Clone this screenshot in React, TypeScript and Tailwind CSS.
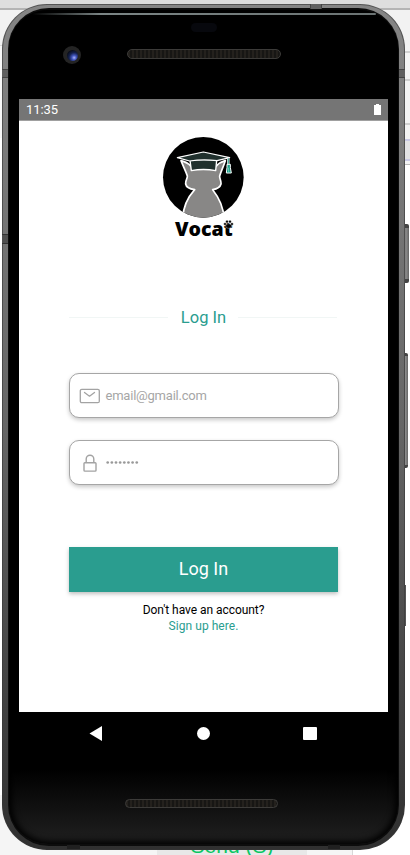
import type { ReactNode } from "react";

function Desktop() {
  return (
    <div className="absolute inset-0 bg-white">
      <div className="h-[8px] bg-[#dedede]" />
      <div className="h-[2px] bg-[#b4b4b4]" />
      <div className="h-[35px] bg-[#f2f2f2]" />
      <div className="flex h-[120px] justify-between">
        <div className="h-[93px] w-3 border-t border-[#d8d8d8] bg-[#f8f8f8]" />
        <div className="flex w-[12px] flex-col bg-[#f3f3f3]">
          <div className="h-[8px] border-b-2 border-[#d0d0d0]" />
          <div className="h-[28px] border-b-2 border-[#d0d0d0]" />
          <div className="h-[44px] border-b-2 border-[#d0d0d0]" />
          <div className="h-[16px] border-b-2 border-[#c9c9e4]" />
          <div className="h-[20px] border-b-2 border-[#c9c9e4] bg-[#e2e2e4]" />
          <div className="h-[4px] border-b border-[#bbbbbb]" />
        </div>
      </div>
      <div className="absolute inset-x-0 bottom-0 flex h-[60px] bg-[#f5f5f5]">
        <div className="w-[157px]" />
        <div className="flex h-full w-[150px] justify-center bg-[#e8e8e8] pt-[39px] font-['Liberation_Sans',sans-serif] text-[21px] leading-[24px] text-[#08c763]">
          Send (S)
        </div>
        <div className="w-[46px] border-r border-[#d8d8d8]" />
        <div className="flex-1 bg-white" />
      </div>
    </div>
  );
}

function SideButtons() {
  return (
    <div className="absolute left-[403px] top-[224px] flex flex-col">
      <div className="h-[59px] w-[6px] rounded-r-[2px] border-y-[4px] border-[#444] bg-gradient-to-r from-[#555] via-[#8c8c8c] to-[#666]" />
      <div className="mt-[70px] h-[115px] w-[5px] rounded-r-[2px] border-y-[3px] border-[#444] bg-gradient-to-r from-[#555] via-[#8c8c8c] to-[#666]" />
      <div className="mt-[117px] h-[41px] w-[3px] bg-[#555]" />
    </div>
  );
}

function Speaker({ className }: { className: string }) {
  return (
    <div
      className={`rounded-full border border-[#3c3b39] bg-[repeating-linear-gradient(90deg,#24211d_0px,#24211d_2px,#171614_2px,#171614_4px)] ${className}`}
    />
  );
}

function Logo() {
  return (
    <svg className="ml-[2px] h-[120px] w-[110px] shrink-0" viewBox="0 0 330 360">
      <defs>
        <clipPath id="disc">
          <circle cx="160" cy="157" r="121" />
        </clipPath>
      </defs>
      <circle cx="160" cy="157" r="121" fill="#000" />
      <g clipPath="url(#disc)">
        <path
          d="M93 107 C105 110 116 116 123 124 L198 124 C205 116 214 110 226 107 C220 125 213 140 209 153 C208 160 214 166 213 177 C210 189 200 192 188 194 C204 214 222 243 222 286 L98 286 C98 246 116 214 134 194 C121 192 109 189 107 177 C106 166 113 160 112 153 C108 140 100 125 93 107Z"
          fill="#888786"
          stroke="#fff"
          strokeWidth="5"
          strokeLinejoin="round"
        />
      </g>
      <path d="M120 106 Q160 101 200 106 L197 137 Q160 130 124 137Z" fill="#20302d" stroke="#fff" strokeWidth="4" strokeLinejoin="round" />
      <path d="M82 98 L160 81 L239 98 L201 107 Q160 102 119 108Z" fill="#20302d" stroke="#fff" strokeWidth="3.5" strokeLinejoin="round" />
      <path d="M235 100 V123" stroke="#fff" strokeWidth="7" />
      <path d="M235 100 V123" stroke="#27a08c" strokeWidth="3" />
      <path d="M231 118 H241 V127 L244 144 H229 L231 127Z" fill="#169c85" stroke="#fff" strokeWidth="3" />
      <path d="M236 128 V142" stroke="#a6e6d8" strokeWidth="2" />
      <text
        x="75"
        y="333"
        textLength="173"
        lengthAdjust="spacingAndGlyphs"
        className="font-['Open_Sans',sans-serif] text-[56px] font-extrabold"
        fill="#000"
      >
        Vocat
      </text>
      <g fill="#000" stroke="#fff" strokeWidth="1">
        <ellipse cx="236" cy="303" rx="9" ry="7" />
        <circle cx="225" cy="297" r="4" />
        <circle cx="231" cy="290" r="4" />
        <circle cx="240" cy="290" r="4" />
        <circle cx="246" cy="297" r="4" />
      </g>
    </svg>
  );
}

function Field({ icon, children }: { icon: ReactNode; children: ReactNode }) {
  return (
    <div className="flex h-[45px] w-[270px] items-center rounded-[10px] border border-[#a6a6a6] bg-white pl-[9px] shadow-[0_2px_4px_rgba(0,0,0,0.22)]">
      <div className="flex w-[22px] justify-center">{icon}</div>
      <div className="pl-[5px] pt-px text-[13px] tracking-[-0.22px] text-[#a6a6a6]">{children}</div>
    </div>
  );
}

function MailIcon() {
  return (
    <svg width="22" height="16" viewBox="0 0 22 16" fill="none" stroke="#a3a3a3" strokeWidth="1.3">
      <rect x="1.3" y="1.3" width="19" height="13.4" rx="1.5" />
      <path d="M5.5 4.5 L10.5 8.2 L15.5 4.5" strokeLinecap="round" strokeLinejoin="round" />
    </svg>
  );
}

function LockIcon() {
  return (
    <svg width="14" height="18" viewBox="0 0 14 18" fill="none" stroke="#a3a3a3" strokeWidth="1.4">
      <rect x="1" y="8.8" width="12" height="8.3" rx="0.8" />
      <path d="M3.2 8.8 V5 a3.8 3.8 0 0 1 7.6 0 V8.8" />
    </svg>
  );
}

function PasswordDots() {
  return (
    <svg width="34" height="4" viewBox="0 0 34 4" fill="#999">
      {Array.from({ length: 8 }, (_, i) => (
        <circle key={i} cx={1.7 + i * 4.15} cy="1.5" r="1.35" />
      ))}
    </svg>
  );
}

function LoginScreen() {
  return (
    <div className="flex h-[613px] w-[369px] flex-col bg-white">
      <div className="flex h-[22px] shrink-0 items-center justify-between border-b border-[#a0a0a0] bg-[#757575] pl-[7px] pr-[7px] text-[13px] text-white">
        <span className="pt-px tracking-[-0.1px]">11:35</span>
        <svg width="7" height="12" viewBox="0 0 7 12" fill="#fff">
          <path d="M2 0h3v1h2v10H0V1h2z" />
        </svg>
      </div>
      <div className="flex flex-col items-center pt-[4px]">
        <Logo />
        <div className="mt-[62px] flex w-[270px] items-center justify-between pr-px">
          <div className="h-px w-[99px] bg-[#f1f6f5]" />
          <div className="pl-px pt-px text-[16.5px] leading-[20px] text-[#2a9d8f]">Log In</div>
          <div className="h-px w-[99px] bg-[#f1f6f5]" />
        </div>
        <div className="mt-[45px]">
          <Field icon={<MailIcon />}>email@gmail.com</Field>
        </div>
        <div className="mt-[22px]">
          <Field icon={<LockIcon />}>
            <PasswordDots />
          </Field>
        </div>
        <button className="mr-px mt-[62px] h-[45px] w-[269px] bg-[#2a9d8f] pb-[2px] pl-px text-[18px] text-white shadow-[0_2px_4px_rgba(0,0,0,0.25)]">
          Log In
        </button>
        <div className="mt-[10px] text-center text-[12px] leading-[16px] text-black">
          <div className="tracking-[-0.05px]">Don't have an account?</div>
          <div className="tracking-[0.05px] text-[#2a9d8f]">Sign up here.</div>
        </div>
      </div>
    </div>
  );
}

function NavBar() {
  return (
    <div className="flex h-[43px] w-[369px] items-center justify-between pl-[70px] pr-[71px]">
      <svg width="14" height="16" viewBox="0 0 14 16" fill="#fff">
        <path d="M0.5 7.5 L13 0 V15Z" />
      </svg>
      <div className="h-[13px] w-[13px] rounded-full bg-white" />
      <div className="h-[13px] w-[14px] rounded-[1px] bg-white" />
    </div>
  );
}

export default function App() {
  return (
    <div className="relative h-[855px] w-[410px] overflow-hidden font-[Roboto,sans-serif]">
      <Desktop />
      <SideButtons />
      <div className="relative ml-[2px] h-[850px] w-[403px] pt-[4px]">
        <div className="h-[846px] rounded-[45px] bg-gradient-to-b from-[#555] via-[#444] via-65% to-[#333] p-px">
          <div className="h-full rounded-[44px] bg-gradient-to-b from-[#858585] via-[#666] via-50% to-[#303030] px-[5px] pb-[3px] pt-[3px]">
            <div className="h-full rounded-[41px] bg-[#0c0c0c] px-px py-[2px]">
              <div className="relative flex h-full flex-col items-center rounded-[39px] bg-[linear-gradient(to_bottom,#000_0,#000_91%,#202020_100%)] shadow-[inset_0_0_6px_3px_#000]">
                <div className="flex h-[89px] w-[369px] flex-col items-center">
                  <div className="mt-[3px] h-[2px] w-[344px] rounded-full bg-gradient-to-r from-transparent via-[#7b8585] via-20% to-[#6b7373]" />
                  <div className="mt-[8px] h-[9px] w-[26px] rounded-full bg-[#07080d]" />
                  <div className="mt-[14px] flex w-full items-center">
                    <div className="ml-[44px] flex h-[18px] w-[18px] items-center justify-center rounded-full bg-[#242424]">
                      <div className="h-[11px] w-[11px] rounded-full bg-[radial-gradient(circle_at_65%_70%,#aab5ff_0,#4054bc_22%,#14204b_48%,#080c18_75%)]" />
                    </div>
                    <Speaker className="mb-[2px] ml-[46px] h-[10px] w-[154px]" />
                  </div>
                </div>
                <LoginScreen />
                <NavBar />
                <Speaker className="mr-[4px] mt-[44px] h-[9px] w-[153px]" />
              </div>
            </div>
          </div>
        </div>
      </div>
      <div className="absolute left-[2px] top-[69px] h-[9px] w-[6px] border-y border-[#444] bg-[#606060]" />
      <div className="absolute left-[399px] top-[69px] h-[9px] w-[6px] border-y border-[#444] bg-[#606060]" />
      <div className="absolute left-[2px] top-[234px] h-[10px] w-[6px] border-y border-[#333] bg-[#505050]" />
      <div className="absolute left-[310px] top-[4px] h-[5px] w-[12px] border-x border-[#444] bg-[#606060]" />
      <div className="absolute left-[67px] top-[845px] h-[4px] w-[13px] bg-[#202020]" />
      <div className="absolute left-[328px] top-[845px] h-[4px] w-[12px] bg-[#202020]" />
    </div>
  );
}
